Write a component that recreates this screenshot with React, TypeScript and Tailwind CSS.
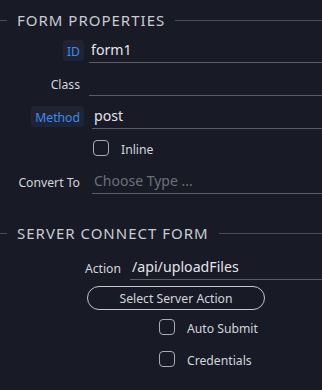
import React from "react";

const font = { fontFamily: '"Noto Sans", "Open Sans", sans-serif' };

function Header({ title }: { title: string }) {
  return (
    <div className="flex items-center h-[21px]">
      <div className="w-[7px] h-px bg-[#4a4d58]" />
      <div className="ml-[10px] mr-[10px] text-[15px] tracking-[1px] text-[#c9ccd3] leading-[15px] whitespace-nowrap">{title}</div>
      <div className="flex-1 h-px bg-[#4a4d58]" />
    </div>
  );
}

function Checkbox() {
  return <div className="w-[16px] h-[16px] shrink-0 rounded-[4px] border border-[#a9acb4]" />;
}

function CheckRow({ label, pl, mt }: { label: string; pl: string; mt: string }) {
  return (
    <div className={`flex items-start h-[16px] ${pl} ${mt}`}>
      <Checkbox />
      <span className="ml-[12px] mt-[2px] text-[12.2px] leading-[16px] whitespace-nowrap">{label}</span>
    </div>
  );
}

export default function App() {
  return (
    <div className="w-[322px] h-[390px] bg-[#181a25] overflow-hidden text-[#d3d6dd]" style={font}>
      <div className="pt-[10px]">
        <Header title="FORM PROPERTIES" />

        <div className="flex mt-[9px] h-[23px]">
          <div className="w-[84px] flex justify-end items-start">
            <span className="h-[21px] px-[4px] pt-[3px] rounded-[3px] bg-[#1e2434] text-[#3d8bf2] text-[12.2px] leading-[18px]">ID</span>
          </div>
          <div className="ml-[5px] flex-1 border-b border-[#5a5d66] flex items-end pb-[2px] pl-[2px]">
            <span className="text-[14.2px] leading-[20px] text-[#e3e5ea]">form1</span>
          </div>
        </div>

        <div className="flex mt-[10px] h-[23px]">
          <div className="w-[84px] flex justify-end items-end pb-[3px] pr-[4px] text-[12.2px] leading-[16px]">Class</div>
          <div className="ml-[5px] flex-1 border-b border-[#5a5d66]" />
        </div>

        <div className="flex mt-[10px] h-[23px]">
          <div className="w-[84px] flex justify-end items-start">
            <span className="h-[21px] px-[4px] pt-[3px] rounded-[3px] bg-[#1e2434] text-[#3d8bf2] text-[12.2px] leading-[18px]">Method</span>
          </div>
          <div className="ml-[8px] flex-1 border-b border-[#5a5d66] flex items-end pb-[2px] pl-[2px]">
            <span className="text-[14.2px] leading-[20px] text-[#e3e5ea]">post</span>
          </div>
        </div>

        <CheckRow label="Inline" pl="pl-[93px]" mt="mt-[11px]" />

        <div className="flex mt-[15px] h-[23px]">
          <div className="w-[84px] flex justify-end items-end pb-[3px] pr-[4px] text-[12.2px] leading-[16px] whitespace-nowrap">Convert To</div>
          <div className="ml-[8px] flex-1 border-b border-[#5a5d66] flex items-end pb-[2px] pl-[2px]">
            <span className="text-[14px] leading-[20px] text-[#6d707a]">Choose Type ...</span>
          </div>
        </div>

        <div className="mt-[29px]">
          <Header title="SERVER CONNECT FORM" />
        </div>

        <div className="flex mt-[13px] h-[23px]">
          <div className="w-[125px] flex justify-end items-end pb-[3px] pr-[4px] text-[12.2px] leading-[16px]">Action</div>
          <div className="ml-[5px] flex-1 border-b border-[#5a5d66] flex items-end pb-[2px] pl-[2px]">
            <span className="text-[14.2px] leading-[20px] text-[#e3e5ea]">/api/uploadFiles</span>
          </div>
        </div>

        <div className="flex mt-[6px] pl-[87px]">
          <div className="w-[178px] h-[24px] rounded-full border border-[#c4c7ce] flex items-start justify-center pt-[4px] text-[12.2px] leading-[16px] whitespace-nowrap">Select Server Action</div>
        </div>

        <CheckRow label="Auto Submit" pl="pl-[159px]" mt="mt-[9px]" />
        <CheckRow label="Credentials" pl="pl-[159px]" mt="mt-[16px]" />
      </div>
    </div>
  );
}
